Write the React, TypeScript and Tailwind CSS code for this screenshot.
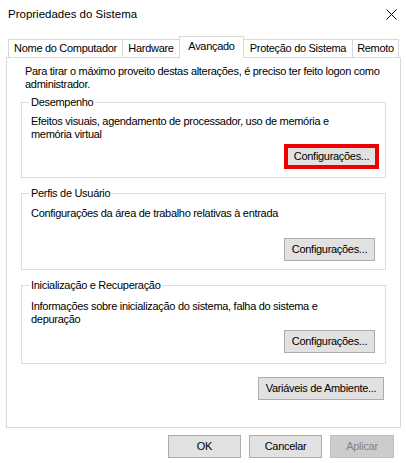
import React from 'react';

function Button({ label, className = '', disabled = false }: { label: string; className?: string; disabled?: boolean }) {
  return (
    <div
      className={
        'flex items-center justify-center h-[23px] border leading-[13px] ' +
        (disabled ? 'bg-[#cccccc] border-[#bfbfbf] text-[#838383] ' : 'bg-[#e1e1e1] border-[#adadad] text-black ') +
        className
      }
    >
      {label}
    </div>
  );
}

function Tab({ label, className = '' }: { label: string; className?: string }) {
  return (
    <div className={'flex items-center justify-center h-[18px] border-t border-[#d9d9d9] bg-white leading-[13px] ' + className}>
      {label}
    </div>
  );
}

function Group({ title, className = '', children }: { title: string; className?: string; children: React.ReactNode }) {
  return (
    <div className={'mx-[14px] border border-[#dcdcdc] flex flex-col ' + className}>
      <div className="-mt-[7px] ml-[7px] self-start px-[2px] h-[13px] leading-[13px] bg-white">{title}</div>
      {children}
    </div>
  );
}

export default function App() {
  return (
    <div className="w-[406px] h-[463px] bg-white text-black text-[11px] tracking-[-0.3px] font-['Liberation_Sans',Arial,sans-serif] flex flex-col">
      {/* title bar */}
      <div className="h-[30px] flex items-center justify-between pl-[8px] pr-[8px]">
        <span className="text-[11.5px] tracking-normal">Propriedades do Sistema</span>
        <svg width="11" height="11" viewBox="0 0 11 11" className="mr-[1px] -mt-[1px]">
          <path d="M0.5 0.5 L10.5 10.5 M10.5 0.5 L0.5 10.5" stroke="#000" strokeWidth="1" fill="none" />
        </svg>
      </div>

      {/* tabs */}
      <div className="mt-[6px] ml-[8px] h-[21px] flex items-end">
        <Tab label="Nome do Computador" className="w-[114px] border-l" />
        <Tab label="Hardware" className="w-[57px] border-l" />
        <div className="relative z-10 -mb-px flex items-center justify-center w-[65px] h-[22px] pb-[2px] border-l border-t border-r border-[#d9d9d9] bg-white leading-[13px]">
          Avançado
        </div>
        <Tab label="Proteção do Sistema" className="w-[108px]" />
        <Tab label="Remoto" className="w-[47px] border-l border-r" />
      </div>

      {/* tab page */}
      <div className="ml-[6px] w-[395px] h-[371px] border border-[#d9d9d9] flex flex-col">
        <p className="pt-[7px] pl-[18px] leading-[13px] whitespace-nowrap">
          Para tirar o máximo proveito destas alterações, é preciso ter feito logon como
          <br />
          administrador.
        </p>

        <Group title="Desempenho" className="mt-[11px] h-[76px]">
          <p className="mt-[6px] pl-[9px] leading-[13px] whitespace-nowrap">
            Efeitos visuais, agendamento de processador, uso de memória e
            <br />
            memória virtual
          </p>
          <div className="mt-[3px] flex justify-end pr-[6px]">
            <div className="w-[95px] h-[25px] border-[4px] border-[#ee0000] bg-[#e1e1e1] flex items-center justify-center leading-[13px]">
              Configurações...
            </div>
          </div>
        </Group>

        <Group title="Perfis de Usuário" className="mt-[15px] h-[77px]">
          <p className="mt-[7px] pl-[9px] leading-[13px] whitespace-nowrap">
            Configurações da área de trabalho relativas à entrada
          </p>
          <div className="mt-[18px] flex justify-end pr-[10px]">
            <Button label="Configurações..." className="w-[91px]" />
          </div>
        </Group>

        <Group title="Inicialização e Recuperação" className="mt-[15px] h-[79px]">
          <p className="mt-[8px] pl-[9px] leading-[13px] whitespace-nowrap">
            Informações sobre inicialização do sistema, falha do sistema e
            <br />
            depuração
          </p>
          <div className="mt-[4px] flex justify-end pr-[10px]">
            <Button label="Configurações..." className="w-[91px]" />
          </div>
        </Group>

        <div className="mt-[13px] flex justify-end pr-[16px]">
          <Button label="Variáveis de Ambiente..." className="w-[126px]" />
        </div>
      </div>

      {/* dialog buttons */}
      <div className="mt-[7px] flex justify-end gap-[8px] pr-[12px]">
        <Button label="OK" className="w-[73px]" />
        <Button label="Cancelar" className="w-[73px]" />
        <Button label="Aplicar" className="w-[64px]" disabled />
      </div>
    </div>
  );
}
